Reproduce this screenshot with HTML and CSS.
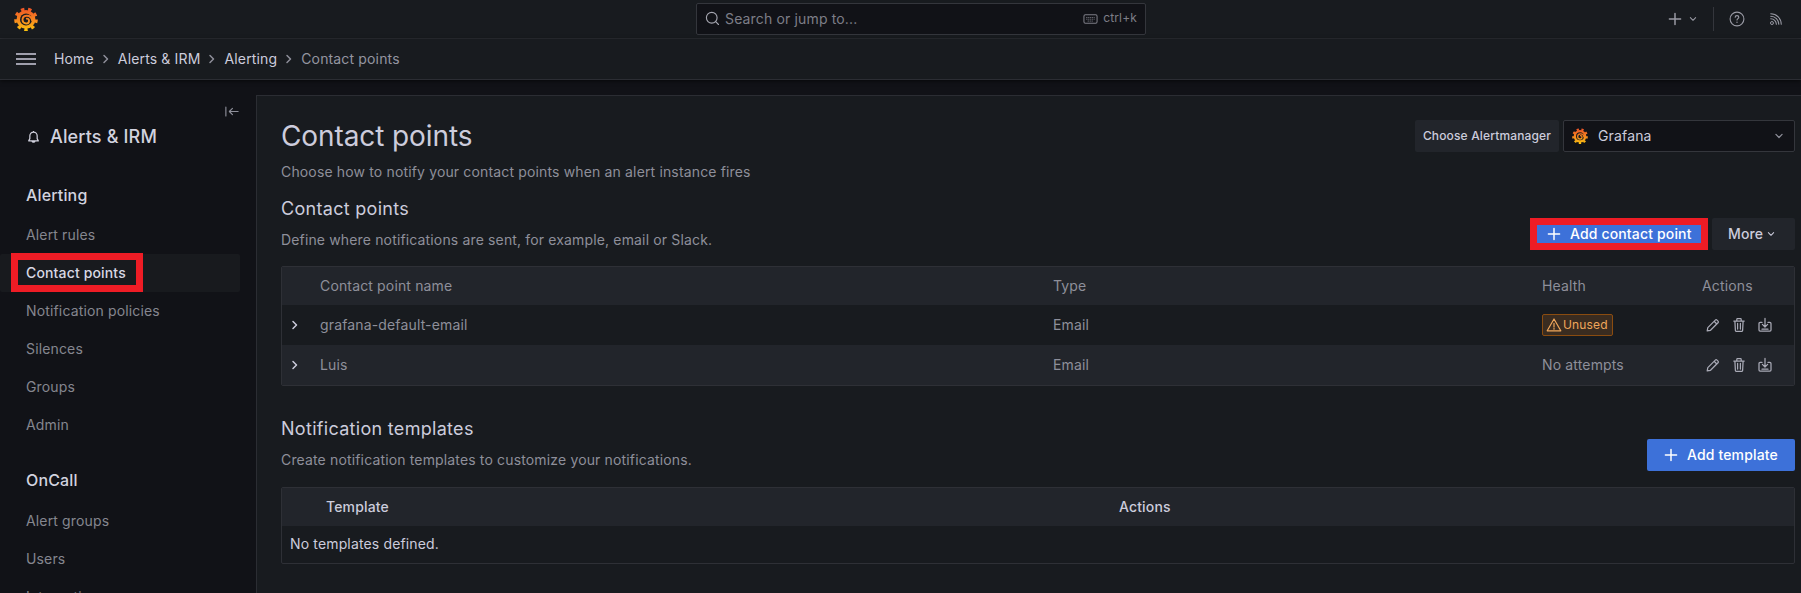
FILE: index.html
```html
<!DOCTYPE html>
<html lang="en">
<head>
<meta charset="utf-8">
<title>Contact points</title>
<link rel="stylesheet" href="styles.css">
</head>
<body>
<svg class="defs" width="0" height="0" aria-hidden="true">
  <defs>
    <linearGradient id="gf" gradientUnits="userSpaceOnUse" x1="12" y1="0" x2="12" y2="24">
      <stop offset="0" stop-color="#ee4f27"/>
      <stop offset=".55" stop-color="#f6891f"/>
      <stop offset="1" stop-color="#fbc50f"/>
    </linearGradient>
    <symbol id="logo" viewBox="0 0 24 24">
      <circle cx="12" cy="12.4" r="9.4" fill="url(#gf)"/>
      <circle cx="12" cy="12.4" r="10.2" fill="none" stroke="url(#gf)" stroke-width="3.2" stroke-dasharray="3.4 3.72"/>
      <circle cx="12" cy="12.4" r="6" fill="#181b1f"/>
      <path fill="none" stroke="url(#gf)" stroke-width="1.9" stroke-linecap="round" d="M18 13.2c-.5-3-2.9-4.6-5.6-4.4-2.3.2-4 2-3.9 4.3.1 2 1.8 3.5 3.8 3.4 1.6-.1 2.8-1.4 2.7-3-.1-1.1-1-2-2.2-1.9"/>
    </symbol>
    <symbol id="pencil" viewBox="0 0 16 16">
      <path fill="none" stroke="currentColor" stroke-width="1.25" stroke-linejoin="round" d="M2.2 13.9l.6-3.3 7.5-7.5a1.2 1.2 0 0 1 1.7 0l1 1a1.2 1.2 0 0 1 0 1.7l-7.5 7.5zM9.1 4.3l2.7 2.7"/>
    </symbol>
    <symbol id="trash" viewBox="0 0 16 16">
      <path fill="none" stroke="currentColor" stroke-width="1.25" stroke-linejoin="round" stroke-linecap="round" d="M2.8 4h10.4M5.8 3.8V2.4c0-.4.3-.7.7-.7h3c.4 0 .7.3.7.7v1.4M3.9 4.2l.5 9.4c0 .4.3.7.7.7h5.8c.4 0 .7-.3.7-.7l.5-9.4M6.6 6.4v5.6M9.4 6.4v5.6"/>
    </symbol>
    <symbol id="export" viewBox="0 0 16 16">
      <path fill="none" stroke="currentColor" stroke-width="1.25" stroke-linejoin="round" stroke-linecap="round" d="M5 5.4H3.1C2.5 5.4 2 5.9 2 6.5v6.4c0 .6.5 1.1 1.1 1.1h9.8c.6 0 1.1-.5 1.1-1.1V6.5c0-.6-.5-1.1-1.1-1.1H11M8 1.4v8.4M5.4 7.4L8 10l2.6-2.6M5 12.2h6"/>
    </symbol>
    <symbol id="chev-r" viewBox="0 0 16 16">
      <path fill="none" stroke="currentColor" stroke-width="1.5" stroke-linecap="round" stroke-linejoin="round" d="M6 4.5L9.5 8 6 11.5"/>
    </symbol>
    <symbol id="chev-d" viewBox="0 0 16 16">
      <path fill="none" stroke="currentColor" stroke-width="1.4" stroke-linecap="round" stroke-linejoin="round" d="M4.5 6.2L8 9.7l3.5-3.5"/>
    </symbol>
    <symbol id="plus" viewBox="0 0 16 16">
      <path fill="none" stroke="currentColor" stroke-width="1.7" stroke-linecap="round" d="M8 1.6v12.8M1.6 8h12.8"/>
    </symbol>
  </defs>
</svg>

<header class="topbar">
  <svg class="logo"><use href="#logo"/></svg>
  <div class="search">
    <svg class="search-icon" viewBox="0 0 16 16"><circle cx="7.2" cy="7.2" r="5.7" fill="none" stroke="currentColor" stroke-width="1.2"/><path d="M11.4 11.4l3 3" stroke="currentColor" stroke-width="1.2" stroke-linecap="round"/></svg>
    <span class="search-text">Search or jump to...</span>
    <svg class="kbd-icon" viewBox="0 0 16 12"><rect x="1" y="1.5" width="14" height="9" rx="1.5" fill="none" stroke="currentColor" stroke-width="1.1"/><path d="M3.5 4.4h9M3.5 6.2h9M5 8.2h6" stroke="currentColor" stroke-width="1" stroke-dasharray="1.2 .9"/></svg>
    <span class="search-hint">ctrl+k</span>
  </div>
  <div class="top-actions">
    <svg class="top-plus"><use href="#plus"/></svg>
    <svg class="top-caret"><use href="#chev-d"/></svg>
    <span class="top-divider"></span>
    <svg class="top-help" viewBox="0 0 16 16"><circle cx="8" cy="8" r="6.9" fill="none" stroke="currentColor" stroke-width="1.1"/><path d="M6.2 6.3c0-1 .8-1.7 1.8-1.7s1.8.7 1.8 1.6c0 1.4-1.8 1.4-1.8 2.8" fill="none" stroke="currentColor" stroke-width="1.1" stroke-linecap="round"/><circle cx="8" cy="11.2" r=".7" fill="currentColor"/></svg>
    <svg class="top-rss" viewBox="0 0 16 16"><circle cx="3.4" cy="12.6" r="1.7" fill="none" stroke="currentColor" stroke-width="1.1"/><path d="M2 7.6a6.4 6.4 0 0 1 6.4 6.4M2 4.8A9.2 9.2 0 0 1 11.2 14M2 2a12 12 0 0 1 12 12" fill="none" stroke="currentColor" stroke-width="1.2" stroke-linecap="round"/></svg>
  </div>
</header>

<nav class="crumbbar">
  <svg class="burger" viewBox="0 0 20 12"><path d="M0 1h20M0 6h20M0 11h20" stroke="currentColor" stroke-width="1.6"/></svg>
  <a class="crumb">Home</a><svg class="crumb-sep"><use href="#chev-r"/></svg>
  <a class="crumb">Alerts &amp; IRM</a><svg class="crumb-sep"><use href="#chev-r"/></svg>
  <a class="crumb">Alerting</a><svg class="crumb-sep"><use href="#chev-r"/></svg>
  <span class="crumb crumb-current">Contact points</span>
</nav>

<div class="layout">
  <aside class="sidebar">
    <div class="collapse-row">
      <svg class="collapse-icon" viewBox="0 0 16 12"><path d="M1 1v10M15 6H5M8.5 2.5L5 6l3.5 3.5" fill="none" stroke="currentColor" stroke-width="1.3" stroke-linecap="round" stroke-linejoin="round"/></svg>
    </div>
    <div class="section-head">
      <svg class="bell" viewBox="0 0 16 16"><path d="M8 2.2a3.9 3.9 0 0 0-3.9 3.9v3.1L2.9 11.6h10.2l-1.2-2.4V6.1A3.9 3.9 0 0 0 8 2.2zM6.3 11.8a1.8 1.8 0 0 0 3.4 0M8 1v1.2" fill="none" stroke="currentColor" stroke-width="1.3" stroke-linejoin="round"/></svg>
      <span>Alerts &amp; IRM</span>
    </div>
    <h3 class="nav-group">Alerting</h3>
    <ul class="nav-list">
      <li class="nav-item">Alert rules</li>
      <li class="nav-item nav-active">Contact points<span class="mark mark-nav"></span></li>
      <li class="nav-item">Notification policies</li>
      <li class="nav-item">Silences</li>
      <li class="nav-item">Groups</li>
      <li class="nav-item">Admin</li>
    </ul>
    <h3 class="nav-group nav-group-second">OnCall</h3>
    <ul class="nav-list nav-list-second">
      <li class="nav-item">Alert groups</li>
      <li class="nav-item">Users</li>
      <li class="nav-item">Integrations</li>
    </ul>
  </aside>

  <main class="panel">
    <div class="page-head">
      <div>
        <h1 class="page-title">Contact points</h1>
        <p class="page-sub">Choose how to notify your contact points when an alert instance fires</p>
      </div>
      <div class="am-picker">
        <span class="am-label">Choose Alertmanager</span>
        <div class="am-select">
          <svg class="am-logo"><use href="#logo"/></svg>
          <span class="am-value">Grafana</span>
          <svg class="am-caret"><use href="#chev-d"/></svg>
        </div>
      </div>
    </div>

    <section class="sec sec-contact">
      <div class="sec-text">
        <h2 class="sec-title">Contact points</h2>
        <p class="sec-sub">Define where notifications are sent, for example, email or Slack.</p>
      </div>
      <div class="sec-actions">
        <button class="btn btn-primary btn-marked"><svg class="btn-plus"><use href="#plus"/></svg>Add contact point<span class="mark mark-btn"></span></button>
        <button class="btn btn-secondary">More<svg class="btn-caret"><use href="#chev-d"/></svg></button>
      </div>
    </section>

    <div class="table">
      <div class="row row-head">
        <span></span><span>Contact point name</span><span>Type</span><span>Health</span><span>Actions</span>
      </div>
      <div class="row row-odd">
        <svg class="row-chev"><use href="#chev-r"/></svg>
        <span>grafana-default-email</span><span>Email</span>
        <span class="badge-cell"><span class="badge"><svg class="badge-icon" viewBox="0 0 16 16"><path d="M8 2L1.2 13.8h13.6zM8 6.4v3.6M8 11.4v.8" fill="none" stroke="currentColor" stroke-width="1.2" stroke-linejoin="round" stroke-linecap="round"/></svg>Unused</span></span>
        <span class="acts"><svg><use href="#pencil"/></svg><svg><use href="#trash"/></svg><svg><use href="#export"/></svg></span>
      </div>
      <div class="row row-even">
        <svg class="row-chev"><use href="#chev-r"/></svg>
        <span>Luis</span><span>Email</span><span>No attempts</span>
        <span class="acts"><svg><use href="#pencil"/></svg><svg><use href="#trash"/></svg><svg><use href="#export"/></svg></span>
      </div>
    </div>

    <section class="sec sec-templates">
      <div class="sec-text">
        <h2 class="sec-title">Notification templates</h2>
        <p class="sec-sub">Create notification templates to customize your notifications.</p>
      </div>
      <div class="sec-actions">
        <button class="btn btn-primary btn-template"><svg class="btn-plus"><use href="#plus"/></svg>Add template</button>
      </div>
    </section>

    <div class="table">
      <div class="row-t row-t-head"><span>Template</span><span>Actions</span></div>
      <div class="row-t-body">No templates defined.</div>
    </div>
  </main>
</div>
</body>
</html>
```

FILE: styles.css
```css
* { box-sizing: border-box; }
html, body { height: 100%; }
body {
  margin: 0;
  overflow: hidden;
  background: #111217;
  color: #ccccdc;
  font-family: Inter, "Liberation Sans", sans-serif;
  font-size: 14px;
  line-height: 20px;
  letter-spacing: .15px;
}
h1, h2, h3, p, ul { margin: 0; padding: 0; }
ul { list-style: none; }
svg { display: block; flex: none; }
.defs { position: absolute; }

.topbar {
  height: 39px;
  display: flex;
  align-items: center;
  background: #181b1f;
  border-bottom: 1px solid #2b2d33;
  position: relative;
  padding-bottom: 1px;
}
.logo { width: 24px; height: 24px; margin-left: 14px; }
.search {
  width: 450px;
  height: 32px;
  margin-left: 658px;
  background: #111217;
  border: 1px solid #34363c;
  border-radius: 2px;
  display: flex;
  align-items: center;
  padding: 0 8px;
  color: #7d7e87;
}
.search-icon { width: 15px; height: 15px; color: #a5a6b0; }
.search-text { margin-left: 5px; flex: 1; }
.kbd-icon { width: 15px; height: 12px; }
.search-hint { font-size: 12px; margin-left: 5px; margin-top: -1px; }
.top-actions { display: flex; align-items: center; margin-left: 522px; color: #9a9ba5; }
.top-plus { width: 14px; height: 14px; }
.top-caret { width: 12px; height: 12px; margin-left: 5px; }
.top-divider { width: 1px; height: 24px; background: #34363c; margin: 0 15px 0 14px; }
.top-help { width: 16px; height: 16px; }
.top-rss { width: 14px; height: 14px; margin-left: 24px; }

.crumbbar {
  height: 41px;
  display: flex;
  align-items: center;
  background: #181b1f;
  border-bottom: 1px solid #2b2d33;
  box-shadow: 0 1px 4px rgba(0, 0, 0, .6);
  position: relative;
}
.burger { width: 20px; height: 12px; margin-left: 16px; margin-right: 18px; color: #ccccdc; }
.crumb { color: #ccccdc; }
.crumb-current { color: #9495a0; }
.crumb-sep { width: 16px; height: 16px; margin: 0 4px; color: #8e8f9a; }

.layout { display: flex; height: 513px; }

.sidebar { width: 256px; flex: none; background: #111217; padding-top: 21px; }
.collapse-row { height: 20px; display: flex; justify-content: flex-end; align-items: center; padding-right: 17px; color: #8e8f9a; }
.collapse-icon { width: 14px; height: 11px; }
.section-head { display: flex; align-items: center; font-size: 18px; font-weight: 500; height: 24px; margin-top: 4px; padding-left: 26px; color: #d2d2df; }
.bell { width: 15px; height: 15px; margin-right: 9px; }
.nav-group { font-size: 16px; font-weight: 500; line-height: 22px; margin-top: 35px; padding-left: 26px; color: #d2d2df; }
.nav-group-second { margin-top: 25px; }
.nav-list { margin-top: 10px; }
.nav-list-second { margin-top: 11px; }
.nav-item { position: relative; height: 38px; line-height: 38px; margin-right: 16px; padding-left: 26px; color: #85868f; border-radius: 2px; }
.nav-active { color: #d8d8e4; font-weight: 500; background: #181a1e; }

.mark { position: absolute; border: 7px solid #ee1c25; pointer-events: none; }
.mark-nav { left: 11px; top: -1px; width: 132px; height: 39px; }
.mark-btn { left: 0; top: 0; right: 0; bottom: 0; }

.panel {
  flex: 1;
  background: #181b1f;
  border-top: 1px solid #2b2d33;
  border-left: 1px solid #2b2d33;
  margin-top: 15px;
  padding: 0 6px 0 24px;
  min-width: 0;
}
.page-head { display: flex; justify-content: space-between; align-items: flex-start; padding-top: 21px; }
.page-title { font-size: 28px; font-weight: 400; line-height: 38px; color: #ccccdc; letter-spacing: -.1px; }
.page-sub { margin-top: 7px; color: #8e8f9a; }
.am-picker { display: flex; gap: 4px; margin-top: 3px; }
.am-label { height: 32px; width: 144px; background: #22252b; color: #ccccdc; font-size: 12px; font-weight: 500; display: flex; align-items: center; justify-content: center; border-radius: 2px; }
.am-select { height: 32px; width: 232px; background: #111217; border: 1px solid #34363c; border-radius: 2px; display: flex; align-items: center; padding: 0 8px; }
.am-logo { width: 16px; height: 16px; margin-right: 10px; }
.am-value { flex: 1; }
.am-caret { width: 14px; height: 14px; color: #8e8f9a; }

.sec { display: flex; justify-content: space-between; align-items: stretch; }
.sec-contact { margin-top: 15px; height: 53px; margin-bottom: 16px; }
.sec-templates { margin-top: 31px; height: 54px; margin-bottom: 16px; }
.sec-title { font-size: 18px; font-weight: 400; line-height: 24px; color: #ccccdc; letter-spacing: .3px; }
.sec-sub { margin-top: 9px; color: #8e8f9a; }
.sec-actions { display: flex; gap: 4px; align-items: flex-end; }

.btn { position: relative; height: 32px; border: 0; border-radius: 2px; font: 500 14px/20px Inter, "Liberation Sans", sans-serif; letter-spacing: .15px; display: flex; align-items: center; color: #fff; padding: 0; }
.btn-primary { background: #3d71d9; }
.btn-marked { width: 178px; padding-left: 17px; }
.btn-template { width: 148px; padding-left: 17px; }
.btn-secondary { background: #22252b; color: #ccccdc; width: 83px; padding-left: 16px; }
.btn-plus { width: 14px; height: 14px; margin-right: 9px; }
.btn-caret { width: 12px; height: 12px; margin-left: 2px; }

.table { border: 1px solid #2e3036; border-radius: 2px; color: #8e8f9a; overflow: hidden; }
.row { display: grid; grid-template-columns: 38px 733px 489px 160px 1fr; align-items: center; height: 40px; }
.row-head { height: 38px; background: #22252b; }
.row-odd { background: #181b1f; }
.row-even { background: #22252b; }
.row-chev { width: 16px; height: 16px; margin-left: 5px; color: #ccccdc; }
.badge-cell { display: flex; align-items: center; }
.badge { display: inline-flex; align-items: center; height: 22px; width: 71px; padding-left: 3px; font-size: 12px; color: #f0a75b; background: #3a2c20; border: 1px solid #8a4c10; border-radius: 2px; }
.badge-icon { width: 16px; height: 16px; margin-right: 1px; }
.acts { display: flex; gap: 10px; padding-left: 3px; color: #a8a9b5; }
.acts svg { width: 16px; height: 16px; }

.row-t { display: grid; grid-template-columns: 793px 1fr; align-items: center; }
.row-t-head { height: 38px; background: #22252b; padding-left: 44px; font-weight: 500; color: #ccccdc; }
.row-t-body { height: 37px; line-height: 36px; padding-left: 8px; color: #ccccdc; }
```
